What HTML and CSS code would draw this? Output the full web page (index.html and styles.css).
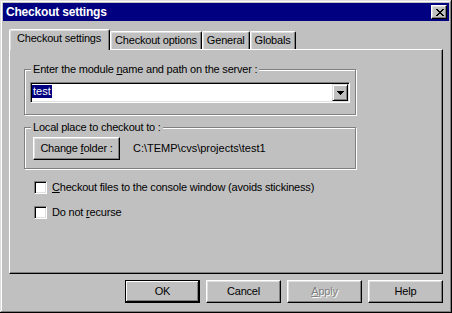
FILE: index.html
```html
<!DOCTYPE html>
<html>
<head>
    <meta charset="utf-8">
    <title>Checkout settings</title>
    <link rel="stylesheet" href="styles.css">
</head>
<body>
    <div class="window">
        <div class="titlebar">
            <span class="title">Checkout settings</span>
            <button class="btn close" aria-label="Close">
                <svg width="8" height="7" viewBox="0 0 8 7" shape-rendering="crispEdges">
                    <path d="M0 0h2v1H0zM6 0h2v1H6zM1 1h2v1H1zM5 1h2v1H5zM2 2h4v1H2zM3 3h2v1H3zM2 4h4v1H2zM1 5h2v1H1zM5 5h2v1H5zM0 6h2v1H0zM6 6h2v1H6z" fill="#000"/>
                </svg>
            </button>
        </div>

        <div class="content">
            <div class="tabs">
                <div class="tab active">Checkout settings</div>
                <div class="tab">Checkout options</div>
                <div class="tab">General</div>
                <div class="tab">Globals</div>
            </div>

            <div class="panel">
                <fieldset class="group group-module">
                    <legend>Enter the module <u>n</u>ame and path on the server :</legend>
                    <div class="combo">
                        <div class="combo-field"><span class="selected">test</span></div>
                        <div class="combo-button">
                            <svg width="7" height="4" viewBox="0 0 7 4" shape-rendering="crispEdges">
                                <path d="M0 0h7v1H0zM1 1h5v1H1zM2 2h3v1H2zM3 3h1v1H3z" fill="#000"/>
                            </svg>
                        </div>
                    </div>
                </fieldset>

                <fieldset class="group group-local">
                    <legend>Local place to checkout to :</legend>
                    <div class="local-row">
                        <button class="btn btn-folder">Change <u>f</u>older :</button>
                        <span class="path">C:\TEMP\cvs\projects\test1</span>
                    </div>
                </fieldset>

                <div class="options">
                    <label class="check"><span class="box"></span><span><u>C</u>heckout files to the console window (avoids stickiness)</span></label>
                    <label class="check"><span class="box"></span><span>Do not <u>r</u>ecurse</span></label>
                </div>
            </div>

            <div class="actions">
                <button class="btn btn-action btn-default">OK</button>
                <button class="btn btn-action">Cancel</button>
                <button class="btn btn-action disabled"><u>A</u>pply</button>
                <button class="btn btn-action">Help</button>
            </div>
        </div>
    </div>
</body>
</html>
```

FILE: styles.css
```css
* {
    box-sizing: border-box;
}

body {
    margin: 0;
    background: #c0c0c0;
    font-family: "Liberation Sans", Arial, sans-serif;
    font-size: 11px;
    line-height: 13px;
    color: #000;
}

.window {
    width: 452px;
    height: 313px;
    padding: 3px;
    background: #c0c0c0;
    display: flex;
    flex-direction: column;
    box-shadow: inset -1px -1px #000, inset 1px 1px #dfdfdf,
                inset -2px -2px #808080, inset 2px 2px #fff;
}

/* title bar */
.titlebar {
    flex: none;
    height: 18px;
    background: #000080;
    color: #fff;
    display: flex;
    align-items: center;
    justify-content: space-between;
    padding: 0 2px 0 3px;
}

.title {
    font-weight: bold;
    font-size: 12px;
    letter-spacing: -0.2px;
    line-height: 18px;
}

/* raised button look */
.btn {
    font: inherit;
    color: #000;
    background: #c0c0c0;
    padding: 0;
    border: 1px solid;
    border-color: #fff #000 #000 #fff;
    box-shadow: inset -1px -1px #808080, inset 1px 1px #dfdfdf;
    letter-spacing: -0.2px;
    line-height: 13px;
}

.close {
    width: 16px;
    height: 14px;
    display: flex;
    align-items: center;
    justify-content: center;
    padding-left: 1px;
}

.close svg {
    display: block;
}

.content {
    flex: 1;
    display: flex;
    flex-direction: column;
    padding: 8px 6px 7px;
}

/* tabs */
.tabs {
    flex: none;
    height: 20px;
    display: flex;
    align-items: flex-end;
}

.tab {
    height: 18px;
    padding: 2px 4px 0;
    border: 1px solid;
    border-bottom: 0;
    border-color: #fff #000 transparent #fff;
    border-radius: 2px 2px 0 0;
    box-shadow: inset -1px 0 #808080, inset 1px 1px #dfdfdf;
    white-space: nowrap;
    letter-spacing: -0.2px;
}

.tab.active {
    height: 21px;
    margin-bottom: -1px;
    padding: 2px 8px 0 7px;
    position: relative;
    z-index: 1;
    background: #c0c0c0;
}

.panel {
    flex: 1;
    border: 1px solid;
    border-color: #fff #000 #000 #fff;
    box-shadow: inset -1px -1px #808080;
    padding: 13px 14px 0;
}

/* group boxes */
.group {
    margin: 0;
    width: 332px;
    min-width: 0;
    border: 1px solid #808080;
    box-shadow: inset 1px 1px #fff, 1px 1px #fff;
    padding: 6px 5px 11px;
}

.group legend {
    padding: 0 2px;
    margin-left: 1px;
    line-height: 13px;
    background: #c0c0c0;
    letter-spacing: -0.2px;
}

.group-local {
    margin-top: 6px;
    padding: 3px 5px 8px;
}

.combo {
    display: flex;
    height: 21px;
    background: #fff;
    border: 1px solid;
    border-color: #808080 #fff #fff #808080;
    box-shadow: inset 1px 1px #000, inset -1px -1px #dfdfdf;
    padding: 1px;
}

.combo-field {
    flex: 1;
    padding-top: 1px;
}

.selected {
    display: inline-block;
    background: #000080;
    color: #fff;
    padding: 0 1px;
    line-height: 13px;
}

.combo-button {
    width: 16px;
    height: 17px;
    display: flex;
    align-items: center;
    justify-content: center;
    background: #c0c0c0;
    border: 1px solid;
    border-color: #dfdfdf #000 #000 #dfdfdf;
    box-shadow: inset 1px 1px #fff, inset -1px -1px #808080;
}

.combo-button svg {
    display: block;
}

.local-row {
    display: flex;
    align-items: center;
    gap: 13px;
}

.btn-folder {
    width: 87px;
    height: 23px;
    margin-left: 3px;
}

/* check boxes */
.options {
    margin: 12px 0 0 10px;
    display: flex;
    flex-direction: column;
    gap: 12px;
}

.check {
    display: flex;
    gap: 5px;
    letter-spacing: -0.2px;
}

.box {
    flex: none;
    width: 13px;
    height: 13px;
    background: #fff;
    border: 1px solid;
    border-color: #808080 #fff #fff #808080;
    box-shadow: inset 1px 1px #000, inset -1px -1px #dfdfdf;
}

/* dialog buttons */
.actions {
    flex: none;
    display: flex;
    justify-content: flex-end;
    gap: 6px;
    margin-top: 6px;
}

.btn-action {
    width: 75px;
    height: 23px;
}

.btn-default {
    border-color: #000;
    box-shadow: inset -1px -1px #000, inset 1px 1px #fff, inset -2px -2px #808080;
}

.disabled {
    color: #808080;
    text-shadow: 1px 1px 0 #fff;
}
```
